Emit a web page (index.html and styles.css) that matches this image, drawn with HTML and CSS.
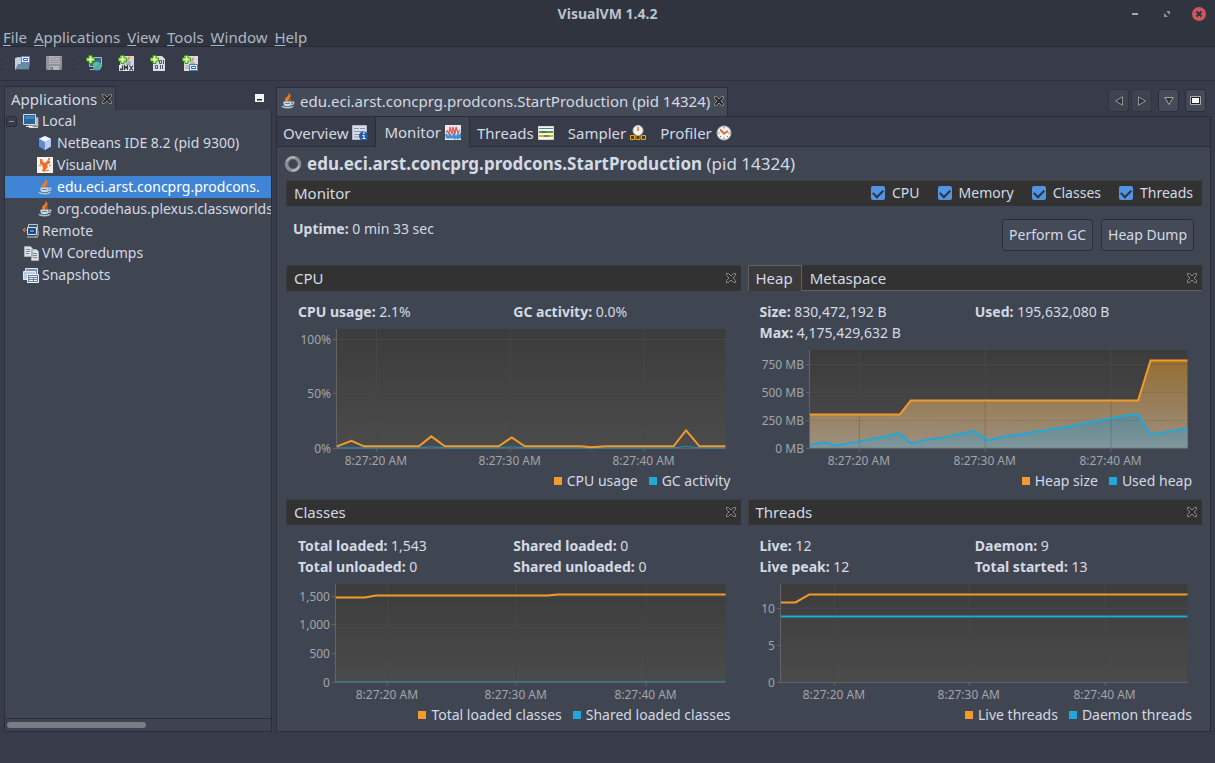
FILE: index.html
```html
<!DOCTYPE html>
<html lang="en">
<head>
<meta charset="utf-8">
<title>VisualVM 1.4.2</title>
<link rel="stylesheet" href="styles.css">
</head>
<body>
<svg class="defs" aria-hidden="true">
  <defs>
    <linearGradient id="plot" x1="0" y1="0" x2="0" y2="1"><stop offset="0" stop-color="#3c3c3c"/><stop offset="1" stop-color="#4b4b4b"/></linearGradient>
    <linearGradient id="heapFill" gradientUnits="userSpaceOnUse" x1="0" y1="17" x2="0" y2="105"><stop offset="0" stop-color="#956d33"/><stop offset="1" stop-color="#9c9080"/></linearGradient>
    <linearGradient id="usedFill" gradientUnits="userSpaceOnUse" x1="0" y1="71" x2="0" y2="105"><stop offset="0" stop-color="#638791"/><stop offset="1" stop-color="#7e979c"/></linearGradient>
    <symbol id="java" viewBox="0 0 16 16"><path d="M7.500 9.500C3 7 5.500 4.500 7.500 3.500 9 2.500 8.500 1 8 0c4 2 2.500 4 1.500 5.200-1 1-.8 2-2 4.300z" fill="#f47a20"/><path d="M9 9c-.5-1.500 1-2.500 1.500-4 1.200 1.500 0 3-1.500 4z" fill="#e05f10"/><path d="M3.500 8.500H11.500v2c0 2-1.500 3-4 3s-4-1-4-3z" fill="#c9dbe6"/><path d="M11.500 9h2.200c.5 2-1 2.500-2.700 2.500" fill="none" stroke="#c3d4de" stroke-width="1.200"/><path d="M1 12.500c3 1.500 10 1.500 13 0-.5 2-2.500 3-6.500 3s-6-1-6.500-3z" fill="#a9c4d0"/><path d="M5 10.500h5M4 13.500h7" stroke="#5b7f92"/></symbol>
    <symbol id="plus" viewBox="0 0 9 9"><path d="M3 .5h3V3h2.500v3H6v2.500H3V6H.5V3H3z" fill="#d8f5a8" stroke="#3f9a12"/></symbol>
    <symbol id="close" viewBox="0 0 10 10"><path d="M.5.5h2L5 3 7.500.5h2v2L7 5l2.500 2.500v2h-2L5 7 2.500 9.500h-2v-2L3 5 .5 2.500z" fill="#2f2f2f" stroke="currentColor"/></symbol>
    <symbol id="page" viewBox="0 0 16 16"><path d="M1.500 1.500h6l2 2v8h-8zM8.500 4.500h5l2 2v9h-7z" fill="#dce0e6" stroke="#a8b0bc"/><path d="M3 4.500h4M3 6.500h4M3 8.500h3M10 8.500h4M10 10.500h4M10 12.500h4" stroke="#7b8794"/></symbol>
  </defs>
</svg>

<header class="titlebar">
  <h1 class="window-title">VisualVM 1.4.2</h1>
  <div class="window-buttons">
    <button class="window-button" aria-label="Minimize"><svg width="14" height="14" viewBox="0 0 14 14"><path d="M4 6h6v2H4z" fill="#a2a8b4"/></svg></button>
    <button class="window-button" aria-label="Restore"><svg width="14" height="14" viewBox="0 0 14 14"><path d="M6 4h4v4zM4 6v4h4z" fill="#8d939f"/></svg></button>
    <button class="window-button" aria-label="Close"><svg width="14" height="14" viewBox="0 0 14 14"><circle cx="7" cy="7" r="7" fill="#cc575d"/><path d="M4.500 4.500l5 5m0-5l-5 5" stroke="#2f343f" stroke-width="2"/></svg></button>
  </div>
</header>
<nav class="menubar">
  <button class="menu"><u>F</u>ile</button><button class="menu"><u>A</u>pplications</button><button class="menu"><u>V</u>iew</button><button class="menu"><u>T</u>ools</button><button class="menu"><u>W</u>indow</button><button class="menu"><u>H</u>elp</button>
</nav>
<div class="toolbar">
  <span class="grip"></span>
  <button class="tool" aria-label="Load"><svg width="16" height="16" viewBox="0 0 16 16"><path d="M1 4l2-2h5v5H1z" fill="#a7b6c4"/><path d="M1 3h6v12H1z" fill="#c3ced8"/><path d="M7.500 1.500h8v6h-8z" fill="#e7eefb" stroke="#5a86cc"/><path d="M9.500 3.500h4v2h-4z" fill="#fff" stroke="#3463b0"/><path d="M1 15l3-6h3l1-1h8l-1.500 7z" fill="#6b8aa5"/><path d="M2 14.500h12" stroke="#3e5a73"/></svg></button>
  <button class="tool" aria-label="Save"><svg width="16" height="16" viewBox="0 0 16 16"><path d="M0 1h16v13l-1 1H1l-1-1z" fill="#909298"/><path d="M3 1h11v8H3z" fill="#b0b2b6"/><path d="M4 3.500h3M4 5.500h3M4 7.500h9M8.500 2.500h5v3h-5z" fill="none" stroke="#92949a"/><path d="M3 11h10v4H3z" fill="#b4b5b9"/><path d="M4 12h3v3H4z" fill="#7e8086"/></svg></button>
  <span class="grip"></span>
  <button class="tool" aria-label="Add Remote Host"><svg width="16" height="16" viewBox="0 0 16 16"><path d="M3.500 2.500h12v9h-12z" fill="#2a6a96" stroke="#aeb8be"/><path d="M5 14h5l1 1H3z" fill="#b4bbc1"/><circle cx="11" cy="11" r="4.500" fill="#4aa0d8"/><path d="M8 8c2-1 4-1 5 0l-2 3-2 2-2-2zM13 11l2-1v3l-2 2z" fill="#6cc653"/><use href="#plus" width="9" height="9"/></svg></button>
  <button class="tool" aria-label="Add JMX Connection"><svg width="16" height="16" viewBox="0 0 16 16"><path d="M2 1h14v15H2z" fill="#d3d5d8"/><path d="M10 6c-2-2 1-3 1-5 2 2 0 3-1 5z" fill="#f08028"/><path d="M7 7h6M8 9h5" stroke="#6c95b0"/><path d="M1 10h15v6H1z" fill="#e9ebed"/><path d="M4.500 10.500v4h-2v-1M6.500 15v-4l1.500 2 1.500-2v4M11.500 10.500l3.500 5M15 10.500l-3.500 5" fill="none" stroke="#33373c" stroke-width="1.300"/><use href="#plus" width="9" height="9"/></svg></button>
  <button class="tool" aria-label="Add VM Coredump"><svg width="16" height="16" viewBox="0 0 16 16"><path d="M3 1h9l3 3v12H3z" fill="#d9dde1"/><path d="M9.500 5.500h2v3h-2zM13.500 5v4M5.500 10.500h2v3h-2zM10.500 10v4M12.500 10v4" fill="none" stroke="#4e5660"/><use href="#plus" width="9" height="9"/></svg></button>
  <button class="tool" aria-label="Add Snapshot"><svg width="16" height="16" viewBox="0 0 16 16"><path d="M2 1h14v15H2z" fill="#d9dde1"/><path d="M10 7c-2-2 1-3 1-5 2 2 0 3-1 5z" fill="#f08028"/><path d="M8 8h5" stroke="#6c95b0"/><path d="M7.500 9.500h8v6h-8z" fill="#dce9fa" stroke="#4a7cc4"/><path d="M9.500 11.500h4v2h-4z" fill="#fff" stroke="#3463b0"/><path d="M3 11h4M3 13h4" stroke="#9ba4ae"/><use href="#plus" width="9" height="9"/></svg></button>
</div>

<main class="workspace">
  <aside class="sidebar">
    <div class="side-tabs">
      <div class="side-tab">Applications <button class="bare" aria-label="Close Applications"><svg class="close" width="10" height="10"><use href="#close"/></svg></button></div>
      <button class="bare minimize" aria-label="Minimize panel"><svg width="9" height="8" viewBox="0 0 9 8"><path d="M0 0h9v8H0z" fill="#f2f2f2"/><path d="M2 5h5v1.500H2z" fill="#222"/></svg></button>
    </div>
    <ul class="tree">
      <li class="node"><button class="toggle" aria-label="Collapse Local"></button><svg width="16" height="16" viewBox="0 0 16 16"><path d="M5 4h10.500v10H5z" fill="#8d8f91"/><path d="M6 14.500h9" stroke="#d8d8d8"/><path d="M.5 1.500h12v10H.5z" fill="#28669f" stroke="#d9d9d6"/><path d="M2 3h9v3H2z" fill="#4385ba"/><path d="M3 13.500h7M14 5v8" stroke="#ececec"/></svg><span>Local</span></li>
      <li class="node child"><svg width="16" height="16" viewBox="0 0 16 16"><path d="M8 .5l6.500 3v8L8 15.500l-6.500-4v-8z" fill="#8fb0e8" stroke="#2d3f78"/><path d="M8 1l6 2.800L8 7 2 3.800z" fill="#eef5ff"/><path d="M8 7l6-3v7.500L8 15z" fill="#b3cdf5"/><path d="M2 4l6 3v8l-6-3.500z" fill="#6688cc"/></svg><span>NetBeans IDE 8.2 (pid 9300)</span></li>
      <li class="node child"><svg width="16" height="16" viewBox="0 0 16 16"><path d="M0 0h16v16H0z" fill="#f5f3f0"/><path d="M3 2h2l1 3 2 1 3-3 2 1v2l-3 2 1 2-2 2-1 3-3-1 1-3-1-3-2-1z" fill="#f0702a"/><path d="M11 1h2v2h-2zM2 8h2v1H2zM12 8h2v1h-2zM9 13h3v1H9z" fill="#e08050"/></svg><span>VisualVM</span></li>
      <li class="node child selected"><svg width="16" height="16"><use href="#java"/></svg><span>edu.eci.arst.concprg.prodcons.</span></li>
      <li class="node child"><svg width="16" height="16"><use href="#java"/></svg><span>org.codehaus.plexus.classworlds</span></li>
      <li class="node"><svg width="16" height="16" viewBox="0 0 16 16"><path d="M5.500 1.500h9v6h-9z" fill="#31556f" stroke="#bfc3c4"/><path d="M4.500 4.500h9v7h-9z" fill="#1d579a" stroke="#ddd"/><path d="M6.500 6.500h5v3h-5z" fill="#5a93cf" stroke="#123d70"/><path d="M4 14h11M15 8v5" stroke="#c7c7c7"/><path d="M12 14h2" stroke="#71c837"/><path d="M0 7h4M2 5l-2 2 2 2" fill="none" stroke="#d58b35"/></svg><span>Remote</span></li>
      <li class="node"><svg width="16" height="16"><use href="#page"/></svg><span>VM Coredumps</span></li>
      <li class="node"><svg width="16" height="16" viewBox="0 0 16 16"><path d="M2.500 1.500h12v8h-12z" fill="#7790b5" stroke="#dde5f0"/><path d="M.5 4.500h12v8H.5z" fill="#bccce2" stroke="#e6ecf5"/><path d="M4.500 7.500h11v8h-11z" fill="#667d9f" stroke="#f3f6fa"/><path d="M6 9.500h8M6 11.500h4M11 11.500h3M6 13.500h4M11 13.500h3" stroke="#eef2f8"/></svg><span>Snapshots</span></li>
    </ul>
    <div class="scroll-track"><div class="scroll-thumb"></div></div>
  </aside>

  <section class="editor">
    <div class="file-tabs">
      <div class="file-tab"><svg width="16" height="16"><use href="#java"/></svg><span>edu.eci.arst.concprg.prodcons.StartProduction (pid 14324)</span><button class="bare" aria-label="Close tab"><svg class="close" width="10" height="10"><use href="#close"/></svg></button></div>
      <div class="pagers">
        <button class="pager dim" aria-label="Scroll left"><svg width="10" height="10" viewBox="0 0 10 10"><path d="M8.500.8v8.400L1.500 5z" fill="#303030" stroke="#969696"/></svg></button>
        <button class="pager dim" aria-label="Scroll right"><svg width="10" height="10" viewBox="0 0 10 10"><path d="M1.500.8v8.400l7-4.200z" fill="#303030" stroke="#969696"/></svg></button>
        <button class="pager apart" aria-label="Show list"><svg width="10" height="10" viewBox="0 0 10 10"><path d="M.8 1.500h8.400L5 8.500z" fill="#303030" stroke="#a8a8a8"/></svg></button>
        <button class="pager apart" aria-label="Maximize"><svg width="11" height="9" viewBox="0 0 11 9"><path d="M.5.5h10v8H.5z" fill="#222" stroke="#aaa"/><path d="M2 2h7v5H2z" fill="#fff"/></svg></button>
      </div>
    </div>
    <div class="view-tabs">
      <button class="view-tab">Overview <svg width="16" height="16" viewBox="0 0 16 16"><path d="M.5.5h14v14H.5z" fill="#d9dee7" stroke="#aeb7c6"/><path d="M2 3.500h5M8 3.500h5M2 6.500h9M2 9.500h6M2 12h5" stroke="#8995a8"/><circle cx="11.500" cy="11" r="4.500" fill="#2258ad"/><path d="M11 7.500h1.500v1.500H11zM10.500 10h2v3h1v1h-3v-1h1v-2h-1z" fill="#fff"/></svg></button>
      <button class="view-tab active">Monitor <svg width="16" height="16" viewBox="0 0 16 16"><path d="M0 1h16v15H0z" fill="#ece7ea"/><path d="M0 11l2-2 1 3 2-3 2 3 2-4 2 4 2-4 1 3 2-3v6l-1 1-1-1-1 2-2-2-1 2-2-2-2 1-1-1-2 1-2-1z" fill="#3f8fd6"/><path d="M1 8l1.500-1L4 10l1-7 2 7 1-7 2 7 1-7 2 6 2-3" fill="none" stroke="#e2524f" stroke-width="1.200"/></svg></button>
      <button class="view-tab">Threads <svg width="16" height="16" viewBox="0 0 16 16"><path d="M.5 1.500h15v13H.5z" fill="#f4f4ec" stroke="#d8d8d8"/><path d="M1 3.500h14" stroke="#5a7d9a"/><path d="M1 7h14" stroke="#589c34" stroke-width="2"/><path d="M1 11h14" stroke="#c8b23c" stroke-width="2"/><path d="M4 7h4M6 11h5" stroke="#3c5a2c"/></svg></button>
      <button class="view-tab">Sampler <svg width="16" height="16" viewBox="0 0 16 16"><circle cx="8" cy="5.500" r="5" fill="#f3f3f3" stroke="#b9bec6"/><path d="M8 2v4" stroke="#e87420" stroke-width="1.500"/><path d="M.5 10.500h4v4H.5zM6 10.500h4v4H6zM11.500 10.500h4v4h-4z" fill="#54380a" stroke="#e0ab34"/></svg></button>
      <button class="view-tab">Profiler <svg width="16" height="16" viewBox="0 0 16 16"><circle cx="8" cy="8" r="7" fill="#f1f1f1" stroke="#b5b5b5"/><path d="M8 2v1.500M8 12.500V14M2 8h1.500M12.500 8H14M4 4l1 1M12 12l-1-1M4 12l1-1" stroke="#777"/><path d="M4.500 5L8 8.500 12 6" fill="none" stroke="#ec6425" stroke-width="1.800"/></svg></button>
    </div>

    <div class="view">
      <h2 class="app-title"><svg width="18" height="18" viewBox="0 0 18 18"><circle cx="9" cy="9" r="6.500" fill="none" stroke="#8b8d90" stroke-width="3.500"/><path d="M3 6a6.500 6.500 0 0 1 8-3.200M15 11a6.500 6.500 0 0 1-7 4.400" fill="none" stroke="#c0c1c3" stroke-width="1.500"/></svg><span><b>edu.eci.arst.concprg.prodcons.StartProduction</b> (pid 14324)</span></h2>
      <div class="bar">
        <span>Monitor</span>
        <div class="checks">
          <label class="check"><input type="checkbox" checked>CPU</label>
          <label class="check"><input type="checkbox" checked>Memory</label>
          <label class="check"><input type="checkbox" checked>Classes</label>
          <label class="check"><input type="checkbox" checked>Threads</label>
        </div>
      </div>
      <div class="summary">
        <p class="uptime"><b>Uptime:</b> 0 min 33 sec</p>
        <div class="actions"><button class="action">Perform GC</button><button class="action">Heap Dump</button></div>
      </div>
      <div class="cards">
        <article class="card">
          <div class="bar"><span>CPU</span><button class="bare" aria-label="Hide CPU"><svg class="close" width="10" height="10"><use href="#close"/></svg></button></div>
          <div class="stats"><span><b>CPU usage:</b> 2.1%</span><span><b>GC activity:</b> 0.0%</span></div>
          <svg class="chart" viewBox="0 0 455 149">
            <path d="M51 7h389v119H51z" fill="url(#plot)"/>
            <path class="grid" d="M90.500 7v119M224.500 7v119M358.500 7v119M51 17.500h389M51 71.500h389"/>
            <path class="axis" d="M50.500 7v119.500H440M47 17.500h4M47 71.500h4M47 126.500h4M90.500 126v4M224.500 126v4M358.500 126v4"/>
            <path class="line cyan faint" d="M51 126h82l12.500-1 13.500 1h54l13-1 13 1h149l12.500-1.500L414 126h26"/>
            <path class="line orange" d="M51 124.500L65.500 119 78 124.500h55l12.500-10 13.500 10h54l13-9 13 9h56l11 1 14-1h68L400.500 108.500 414 124.500h26"/>
            <g class="y-labels"><text x="45" y="22">100%</text><text x="45" y="76">50%</text><text x="45" y="131">0%</text></g>
            <g class="x-labels"><text x="90" y="143">8:27:20 AM</text><text x="224" y="143">8:27:30 AM</text><text x="358" y="143">8:27:40 AM</text></g>
          </svg>
          <div class="legend"><span class="key">CPU usage</span><span class="key second">GC activity</span></div>
        </article>
        <article class="card">
          <div class="bar tabbed"><button class="card-tab current">Heap</button><button class="card-tab">Metaspace</button><button class="bare last" aria-label="Hide Heap"><svg class="close" width="10" height="10"><use href="#close"/></svg></button></div>
          <div class="stats"><span><b>Size:</b> 830,472,192 B</span><span><b>Used:</b> 195,632,080 B</span><span><b>Max:</b> 4,175,429,632 B</span></div>
          <svg class="chart" viewBox="0 0 455 128">
            <path d="M62 7h378v98H62z" fill="url(#plot)"/>
            <path class="grid" d="M111.500 7v51M237.500 7v51M363.500 7v51M62 21.500h341M62 49.500h341"/>
            <path d="M62 71.500h90l11-14h227.500L403 17.500h37V105H62z" fill="url(#heapFill)"/>
            <path d="M62 102.500l13-3 13.500 3L110 99l42-8.500 11 10 15.500-3.500 18.500-2.500 18-4.500 12-1.500 12.500 9L255 94l70-11 15-3.500 23.500-4L380 72l10.500-.5 12.500 20 37-6V105H62z" fill="url(#usedFill)"/>
            <path class="grid deep" d="M111.500 72v33M237.500 58v47M363.500 58v47"/><path class="grid deep dots" d="M403 21.500h37M393 49.500h47M62 77.500h378"/>
            <path class="axis" d="M61.500 7v98.500H440M58 21.500h4M58 49.500h4M58 77.500h4M58 105.500h4M111.500 105v4M237.500 105v4M363.500 105v4"/>
            <path class="line orange" d="M62 71.500h90l11-14h227.500L403 17.500h37"/>
            <path class="line cyan" d="M62 102.500l13-3 13.500 3L110 99l42-8.500 11 10 15.500-3.500 18.500-2.500 18-4.500 12-1.500 12.500 9L255 94l70-11 15-3.500 23.500-4L380 72l10.500-.5 12.500 20 37-6"/>
            <g class="y-labels"><text x="56" y="26">750 MB</text><text x="56" y="54">500 MB</text><text x="56" y="82">250 MB</text><text x="56" y="110">0 MB</text></g>
            <g class="x-labels"><text x="111" y="122">8:27:20 AM</text><text x="237" y="122">8:27:30 AM</text><text x="363" y="122">8:27:40 AM</text></g>
          </svg>
          <div class="legend"><span class="key">Heap size</span><span class="key second">Used heap</span></div>
        </article>
        <article class="card">
          <div class="bar"><span>Classes</span><button class="bare" aria-label="Hide Classes"><svg class="close" width="10" height="10"><use href="#close"/></svg></button></div>
          <div class="stats"><span><b>Total loaded:</b> 1,543</span><span><b>Shared loaded:</b> 0</span><span><b>Total unloaded:</b> 0</span><span><b>Shared unloaded:</b> 0</span></div>
          <svg class="chart" viewBox="0 0 455 128">
            <path d="M50 7h390v98H50z" fill="url(#plot)"/>
            <path class="grid" d="M101.500 7v98M230.500 7v98M360.500 7v98M50 19.500h390M50 47.500h390M50 76.500h390"/>
            <path class="axis" d="M49.500 7v98.500H440M46 19.500h4M46 47.500h4M46 76.500h4M46 105.500h4M101.500 105v4M230.500 105v4M360.500 105v4"/>
            <path class="thin" d="M50 104.500h390"/>
            <path class="line orange" d="M50 20.500h29l11-2h172l10-1h168"/>
            <g class="y-labels"><text x="44" y="24">1,500</text><text x="44" y="52">1,000</text><text x="44" y="81">500</text><text x="44" y="110">0</text></g>
            <g class="x-labels"><text x="101" y="122">8:27:20 AM</text><text x="230" y="122">8:27:30 AM</text><text x="360" y="122">8:27:40 AM</text></g>
          </svg>
          <div class="legend"><span class="key">Total loaded classes</span><span class="key second">Shared loaded classes</span></div>
        </article>
        <article class="card">
          <div class="bar"><span>Threads</span><button class="bare" aria-label="Hide Threads"><svg class="close" width="10" height="10"><use href="#close"/></svg></button></div>
          <div class="stats"><span><b>Live:</b> 12</span><span><b>Daemon:</b> 9</span><span><b>Live peak:</b> 12</span><span><b>Total started:</b> 13</span></div>
          <svg class="chart" viewBox="0 0 455 128">
            <path d="M33 7h407v98H33z" fill="url(#plot)"/>
            <path class="grid" d="M86.500 7v98M221.500 7v98M357.500 7v98M33 31.500h407M33 68.500h407"/>
            <path class="axis" d="M32.500 7v98.500H440M29 31.500h4M29 68.500h4M29 105.500h4M86.500 105v4M221.500 105v4M357.500 105v4"/>
            <path class="line orange" d="M33 25.500h14.500l14-8H440"/>
            <path class="line cyan" d="M33 39.500h407"/>
            <g class="y-labels"><text x="27" y="36">10</text><text x="27" y="73">5</text><text x="27" y="110">0</text></g>
            <g class="x-labels"><text x="86" y="122">8:27:20 AM</text><text x="221" y="122">8:27:30 AM</text><text x="357" y="122">8:27:40 AM</text></g>
          </svg>
          <div class="legend"><span class="key">Live threads</span><span class="key second">Daemon threads</span></div>
        </article>
      </div>
    </div>
  </section>
</main>
<footer class="statusbar"></footer>
</body>
</html>
```

FILE: styles.css
```css
* { box-sizing: border-box; }
body {
  margin: 0;
  min-height: 100vh;
  display: flex;
  flex-direction: column;
  background: #383c4a;
  color: #d3dae3;
  font: 14px/22px "Noto Sans", "Open Sans", sans-serif;
}
button { font: inherit; color: inherit; background: none; border: 0; padding: 0; margin: 0; }
svg { display: block; flex: none; }
p, h1, h2, ul { margin: 0; padding: 0; }
.defs { position: absolute; width: 0; height: 0; }
.bare { display: flex; }
.close { color: #8a8a8a; }

.titlebar {
  display: grid;
  grid-template-columns: 1fr auto 1fr;
  align-items: center;
  height: 27px;
  padding: 0 9px;
  background: #2f343f;
}
.window-title { grid-column: 2; font-size: 14px; font-weight: 700; color: #bcc3d0; }
.window-buttons { display: flex; justify-content: flex-end; gap: 18px; }
.window-button { display: flex; }

.menubar {
  display: flex;
  gap: 7px;
  height: 20px;
  padding: 0 3px;
  background: #2f343f;
  border-bottom: 1px solid #262a33;
  color: #aeb7c5;
  font-size: 15px;
  line-height: 20px;
}
.menu u { text-underline-offset: 2px; }

.toolbar {
  display: flex;
  align-items: center;
  gap: 16px;
  height: 34px;
  padding: 0 0 2px 6px;
  border-bottom: 1px solid #2e313d;
}
.grip { width: 1px; height: 8px; margin-right: -9px; border-top: 1px solid #5b6070; border-bottom: 1px solid #5b6070; }
.tool { display: flex; }

.workspace { flex: 1; display: flex; gap: 4px; padding: 5px 4px 0; }
.sidebar { flex: 0 0 268px; display: flex; flex-direction: column; min-width: 0; }
.side-tabs { display: flex; justify-content: space-between; align-items: center; height: 24px; padding-right: 8px; }
.side-tab {
  display: flex;
  align-items: center;
  gap: 5px;
  height: 24px;
  padding: 0 3px 0 6px;
  background: #404552;
  border: 1px solid #2b2e39;
  border-bottom: 0;
  font-size: 15px;
}
.tree {
  flex: 1;
  list-style: none;
  background: #404552;
  border: solid #2b2e39;
  border-width: 0 1px;
  overflow: hidden;
}
.node { display: flex; align-items: center; gap: 3px; height: 22px; padding-left: 18px; white-space: nowrap; }
.node:has(.toggle) { padding-left: 1px; }
.child { padding-left: 32px; gap: 4px; }
.selected { background: #4084d6; color: #fff; }
.toggle {
  display: grid;
  place-items: center;
  width: 11px;
  height: 11px;
  margin-right: 3px;
  background: #383c4a;
  border: 1px solid #2b2e39;
  border-radius: 2px;
}
.toggle::before { content: ""; width: 5px; height: 1px; background: #8f96a3; }
.scroll-track { height: 14px; padding: 3px 2px; background: #3e434f; border: 1px solid #2b2e39; }
.scroll-thumb { width: 139px; height: 6px; border-radius: 3px; background: #787d87; }

.editor { flex: 1; min-width: 0; display: flex; flex-direction: column; }
.file-tabs { display: flex; justify-content: space-between; align-items: flex-start; height: 30px; padding: 1px 5px 0 0; }
.file-tab {
  display: flex;
  align-items: center;
  gap: 4px;
  height: 29px;
  padding: 0 3px 2px;
  background: #444a58;
  border: 1px solid #2b2e39;
  border-bottom: 0;
  font-size: 15px;
}
.pagers { display: flex; padding-top: 2px; gap: 2px; }
.pager {
  display: grid;
  place-items: center;
  width: 21px;
  height: 23px;
  background: #444a58;
  border: 1px solid #2b2e39;
  border-radius: 3px;
}
.dim { background: #3e4350; border-color: #313541; }
.apart { margin-left: 4px; }
.view-tabs { display: flex; height: 31px; border: 1px solid #2b2e39; font-size: 15px; }
.view-tab { display: flex; align-items: center; gap: 4px; padding: 2px 7px 0; }
.view-tab:first-child { padding-left: 6px; }
.view-tab.active { background: #404552; border: solid #2b2e39; border-width: 0 1px; margin-bottom: -1px; padding: 0 8px; }
.view { flex: 1; padding: 4px 8px 6px 9px; background: #404552; border: solid #2b2e39; border-width: 0 1px 1px; }

.app-title { display: flex; align-items: center; gap: 5px; height: 26px; margin: 0 0 3px -2px; font-size: 17px; font-weight: 400; }
.bar {
  display: flex;
  justify-content: space-between;
  align-items: center;
  height: 26px;
  padding: 0 5px 1px 7px;
  background: #323232;
  border: solid #3c3d40;
  border-width: 1px 0 0 1px;
  font-size: 15px;
}
.checks { display: flex; gap: 18px; padding-right: 4px; font-size: 14px; }
.check { display: flex; align-items: center; gap: 7px; }
.check input {
  appearance: none;
  display: grid;
  place-items: center;
  width: 14px;
  height: 14px;
  margin: 0;
  border-radius: 2px;
  background: #5294e2;
}
.check input:checked::before { content: ""; width: 8px; height: 5px; margin-top: -2px; border: solid #2b3345; border-width: 0 0 2px 2px; transform: rotate(-45deg); }
.summary { display: flex; justify-content: space-between; align-items: flex-start; padding: 13px 8px 14px 7px; }
.uptime { line-height: 20px; }
.actions { display: flex; gap: 8px; }
.action { height: 32px; padding: 0 6px; background: #444a58; border: 1px solid #2b2e39; border-radius: 3px; }

.cards { display: grid; grid-template-columns: 1fr 1fr; gap: 8px 7px; }
.card { display: flex; flex-direction: column; min-width: 0; }
.stats { display: grid; grid-template-columns: 1fr 1fr; padding: 10px 12px 0; line-height: 21px; }
.bar.tabbed { padding: 0 5px 0 0; border-color: #606060; border-width: 0 0 1px; justify-content: flex-start; }
.card-tab { height: 25px; padding: 0 8px; }
.current { height: 26px; margin-bottom: -1px; background: #3a3a3a; border: solid #606060; border-width: 1px 1px 0; padding: 0 8px 1px 7px; }
.last { margin-left: auto; }
.chart { width: 100%; height: auto; font-size: 12px; }
.grid, .axis, .line, .thin { fill: none; }
.grid { stroke: #474747; }
.deep { stroke: #000; stroke-opacity: .15; }
.dots { stroke-dasharray: 1 1; }
.axis { stroke: #646668; }
.line { stroke-width: 2; }
.orange { stroke: #f29b2c; }
.cyan { stroke: #20a8d8; }
.faint { stroke-width: 1; stroke: #2390b5; }
.thin { stroke: #2b7f96; }
.y-labels, .x-labels { fill: #a2a5aa; }
.y-labels { text-anchor: end; }
.x-labels { text-anchor: middle; }
.legend { display: flex; justify-content: flex-end; gap: 11px; padding-right: 10px; line-height: 20px; }
.key { display: flex; align-items: center; gap: 5px; }
.key::before { content: ""; width: 8px; height: 8px; background: #f29b2c; }
.second::before { background: #20a8d8; }
.statusbar { height: 31px; }
```
